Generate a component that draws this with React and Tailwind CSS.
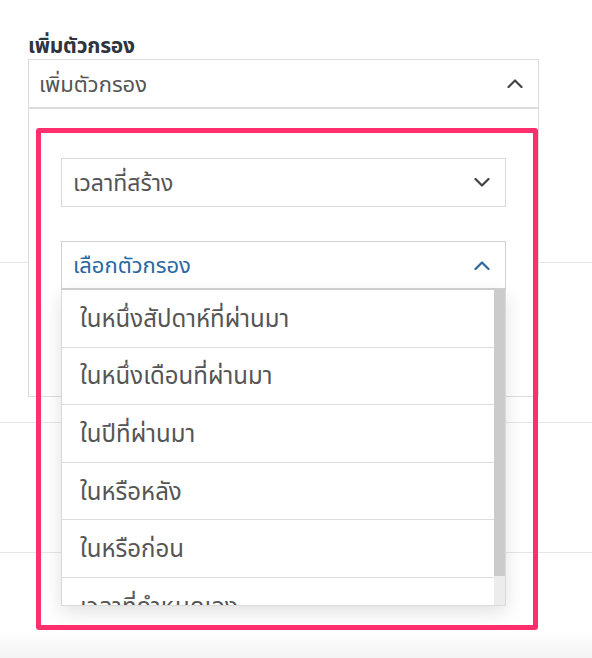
import React from 'react';

const items = [
  'ในหนึ่งสัปดาห์ที่ผ่านมา',
  'ในหนึ่งเดือนที่ผ่านมา',
  'ในปีที่ผ่านมา',
  'ในหรือหลัง',
  'ในหรือก่อน',
  'เวลาที่กำหนดเอง',
];

function Chevron({ up, className }) {
  return (
    <svg width="16" height="9" viewBox="0 0 16 9" fill="none" className={className}>
      <polyline
        points={up ? '1.5,8 8,1.5 14.5,8' : '1.5,1 8,7.5 14.5,1'}
        stroke="currentColor"
        strokeWidth="2.2"
        strokeLinecap="round"
        strokeLinejoin="round"
      />
    </svg>
  );
}

export default function App() {
  return (
    <div
      className="relative h-[658px] overflow-hidden bg-white"
      style={{ fontFamily: '"Noto Sans Thai", "Noto Sans", "DejaVu Sans", sans-serif' }}
    >
      {/* page rows behind the popover */}
      <div className="pt-[262px]">
        <div className="h-[160px] border-t border-[#e6e6e6]" />
        <div className="h-[130px] border-t border-[#e6e6e6]" />
        <div className="h-[80px] border-t border-[#e6e6e6]" />
      </div>
      <div className="absolute inset-x-0 bottom-0 h-[28px] bg-gradient-to-b from-white to-[#f4f4f4]" />

      {/* filter popover */}
      <div className="absolute left-[28px] top-[30px] w-[511px]">
        <div className="h-[29px] pt-[2px] text-[21px] font-bold leading-[29px] tracking-[-0.2px] text-[#2e3440]">เพิ่มตัวกรอง</div>
        <div className="border border-[#dcdcdc] bg-white">
          <div className="flex h-[49px] items-center justify-between border-b-2 border-[#dcdcdc] pl-[10px] pr-[15px]">
            <span className="pt-[3px] text-[22px] text-[#555]">เพิ่มตัวกรอง</span>
            <Chevron up className="text-[#444]" />
          </div>
          <div className="h-[287px] px-[32px] pt-[49px]">
            <div className="flex h-[49px] items-center justify-between border border-[#d9d9d9] bg-white pl-[11px] pr-[15px]">
              <span className="pt-[3px] text-[23px] text-[#555]">เวลาที่สร้าง</span>
              <Chevron className="text-[#444]" />
            </div>
            <div className="relative mt-[34px]">
              <div className="flex h-[49px] items-center justify-between border border-b-2 border-[#d2d2d2] bg-white pl-[11px] pr-[15px]">
                <span className="pt-[3px] text-[22px] text-[#2a67a3]">เลือกตัวกรอง</span>
                <Chevron up className="text-[#2a67a3]" />
              </div>
              <div className="absolute inset-x-0 top-full z-10 flex h-[316px] border-x border-b border-[#dadada] bg-white shadow-[0_6px_18px_rgba(0,0,0,0.12)]">
                <div className="flex-1 overflow-hidden">
                  {items.map((t) => (
                    <div
                      key={t}
                      className="flex h-[57.6px] items-center border-b border-[#dedede] pl-[18px] pt-[3px] text-[24px] text-[#555]"
                    >
                      {t}
                    </div>
                  ))}
                </div>
                <div className="flex w-[11px] flex-col">
                  <div className="h-[286px] bg-[#cbcbcb]" />
                  <div className="flex-1 bg-[#ececec]" />
                </div>
              </div>
            </div>
          </div>
        </div>
      </div>

      {/* highlight annotation */}
      <div className="pointer-events-none absolute left-[36px] top-[128px] z-20 h-[502px] w-[502px] rounded-[3px] border-[5px] border-[#ff2f6e]" />
    </div>
  );
}
